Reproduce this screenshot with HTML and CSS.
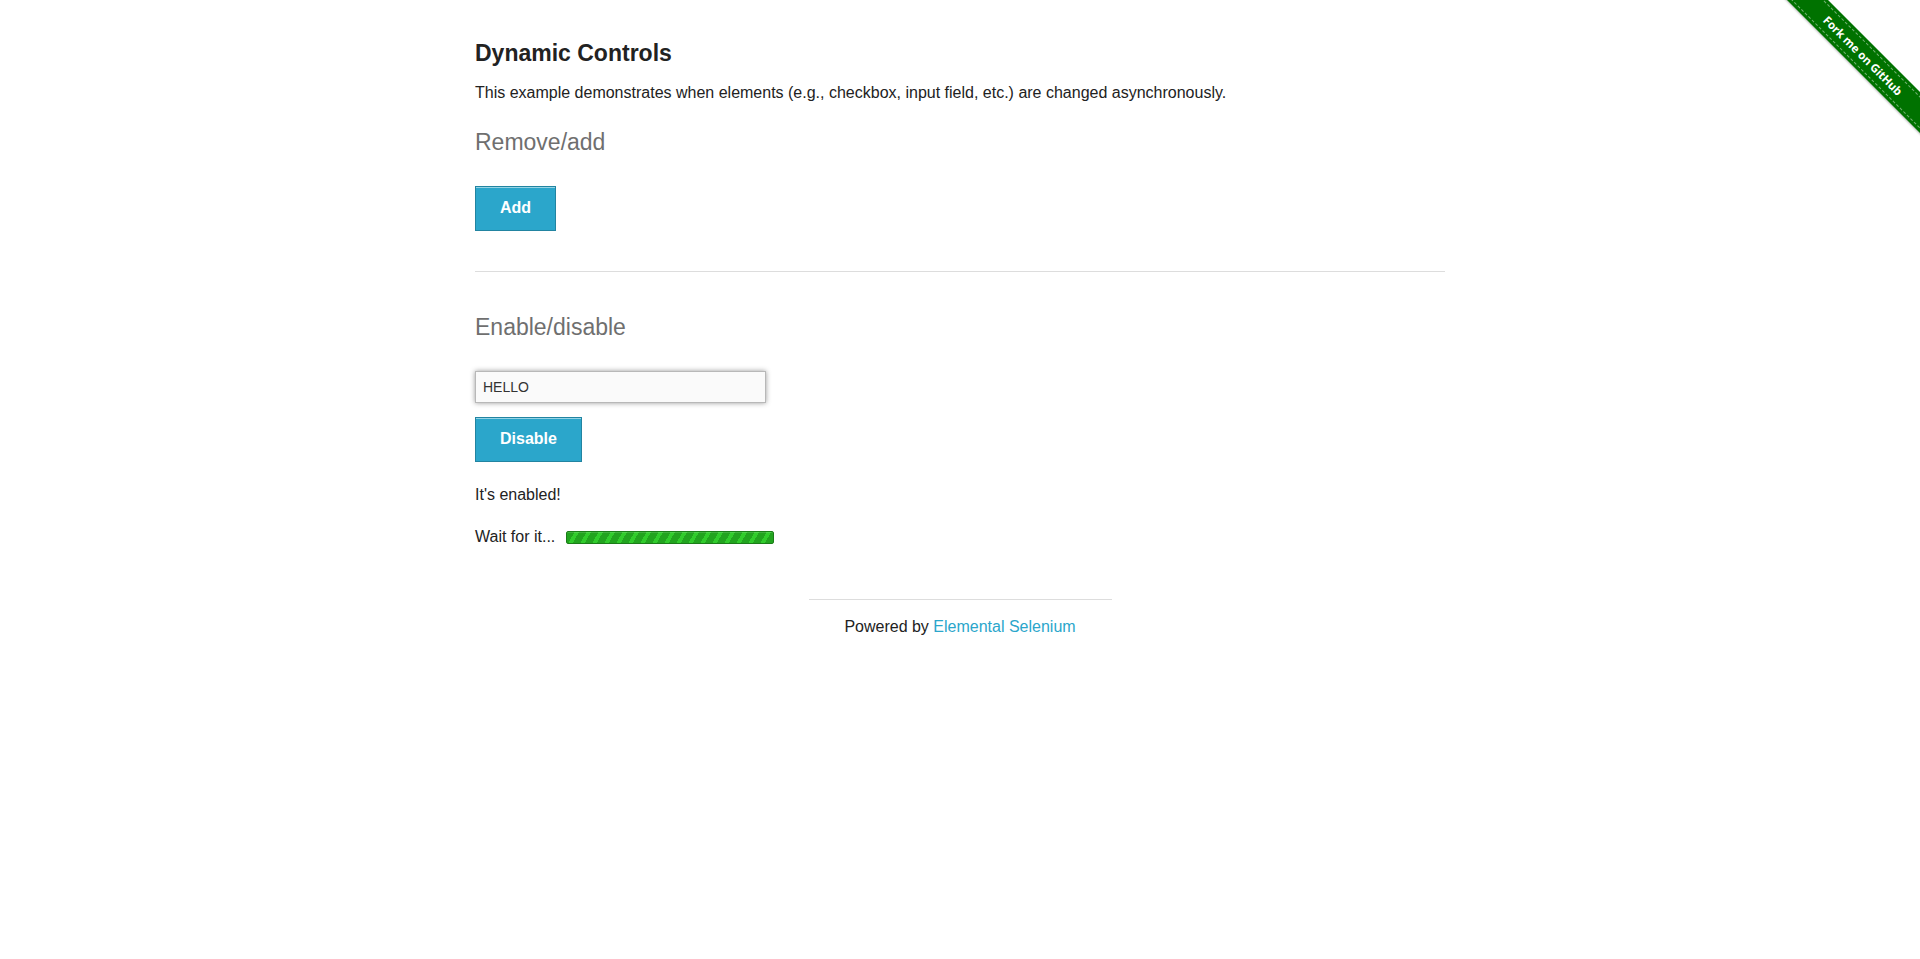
FILE: index.html
```html
<!DOCTYPE html>
<html lang="en">
<head>
<meta charset="utf-8">
<title>The Internet</title>
<link rel="stylesheet" href="styles.css">
</head>
<body>
<a class="ribbon-wrap" href="#"><span class="ribbon"><span class="ribbon-text">Fork me on GitHub</span></span></a>
<main class="page">
  <div class="example">
    <h3 class="title">Dynamic Controls</h3>
    <p class="lead">This example demonstrates when elements (e.g., checkbox, input field, etc.) are changed asynchronously.</p>
    <h4 class="subheader">Remove/add</h4>
    <form class="control-form">
      <button type="button" class="btn">Add</button>
    </form>
    <hr class="divider">
    <h4 class="subheader second">Enable/disable</h4>
    <form class="control-form">
      <input class="text-input" type="text" value="HELLO" autofocus>
      <button type="button" class="btn btn-gap">Disable</button>
      <p class="message">It's enabled!</p>
      <div class="loading">
        <span>Wait for it...</span>
        <span class="bar"></span>
      </div>
    </form>
  </div>
</main>
<footer class="page-footer">
  <hr class="footer-rule">
  <div class="footer-text">Powered by <a class="footer-link" href="#">Elemental Selenium</a></div>
</footer>
</body>
</html>
```
FILE: styles.css
```css
* { box-sizing: border-box; }
html, body { margin: 0; padding: 0; background: #fff; }
body {
  font-family: "Liberation Sans", Arial, sans-serif;
  font-size: 16px;
  line-height: 20px;
  color: #222;
  position: relative;
}
.page {
  width: 970px;
  margin: 0 auto;
  padding-top: 39px;
}
.title {
  margin: 0 0 15px;
  font-size: 23px;
  line-height: 28px;
  font-weight: bold;
  color: #222;
}
.lead {
  margin: 0 0 26px;
  font-size: 16px;
  line-height: 20px;
  position: relative;
  top: 1px;
}
.subheader {
  margin: 0 0 30px;
  font-size: 23px;
  line-height: 28px;
  font-weight: normal;
  color: #6f6f6f;
}
.subheader.second { margin-top: 41px; }
.control-form {
  display: flex;
  flex-direction: column;
  align-items: flex-start;
  margin: 0;
}
.btn {
  font-family: "Liberation Sans", Arial, sans-serif;
  font-size: 16px;
  line-height: 18px;
  font-weight: bold;
  color: #fff;
  background: #2ba6cb;
  border: 1px solid #2284a1;
  padding: 12px 24px 13px;
  margin: 0;
  box-shadow: inset 0 1px 0 rgba(255,255,255,0.5);
  cursor: pointer;
}
.btn-gap { margin-top: 14px; }
.divider {
  border: 0;
  border-top: 1px solid #ddd;
  height: 0;
  margin: 40px 0 0;
}
.text-input {
  width: 291px;
  height: 32px;
  padding: 0 7px;
  margin: 0;
  font-family: "Liberation Sans", Arial, sans-serif;
  font-size: 14px;
  color: #333;
  background: #fafafa;
  border: 1px solid #b8b8b8;
  border-radius: 0;
  box-shadow: 0 0 5px #999;
  outline: none;
  caret-color: #222;
}
.message {
  margin: 23px 0 0;
}
.loading {
  margin-top: 22px;
  display: flex;
  align-items: center;
  gap: 11px;
}
.bar {
  display: block;
  width: 208px;
  height: 13px;
  border: 1px solid #1b7d18;
  border-radius: 2px;
  background: repeating-linear-gradient(120deg, #22a41f 0 6.6px, #31cc2c 6.6px 10.4px);
  box-shadow: inset 0 1px 0 rgba(255,255,255,0.15);
}
.page-footer {
  width: 303px;
  margin: 52px auto 0;
}
.footer-rule {
  border: 0;
  border-top: 1px solid #ddd;
  height: 0;
  margin: 0;
}
.footer-text {
  margin-top: 17px;
  text-align: center;
  line-height: 20px;
  color: #222;
}
.footer-link {
  color: #2ba6cb;
  text-decoration: none;
}
.ribbon-wrap {
  position: absolute;
  top: 0;
  right: 0;
  width: 149px;
  height: 149px;
  overflow: hidden;
  text-decoration: none;
}
.ribbon {
  position: absolute;
  left: -19px;
  top: 41px;
  width: 222px;
  height: 29px;
  padding: 3px 0;
  background: #007200;
  transform: rotate(45deg);
  box-shadow: 0 1px 2px rgba(0,0,0,0.25);
}
.ribbon-text {
  display: block;
  height: 23px;
  border-top: 1px dashed rgba(255,255,255,0.45);
  border-bottom: 1px dashed rgba(255,255,255,0.45);
  color: #fff;
  font-family: "Open Sans", "Liberation Sans", sans-serif;
  font-weight: bold;
  font-size: 11.5px;
  line-height: 21px;
  text-align: center;
  letter-spacing: -0.1px;
}
```
